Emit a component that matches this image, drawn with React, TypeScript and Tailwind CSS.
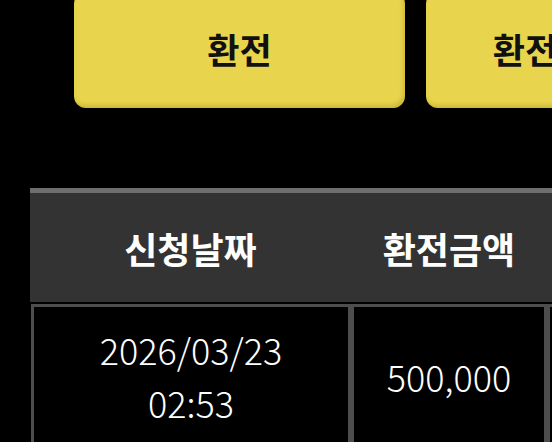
import React from "react";

const font = { fontFamily: '"Noto Sans CJK KR", "Noto Sans", sans-serif' };

function ExchangeButton({ width }: { width: string }) {
  return (
    <button
      className={`${width} h-[116px] shrink-0 rounded-[12px] bg-[#e9d54d] shadow-[inset_-2px_-3px_4px_rgba(120,100,0,0.25)] pb-[4px] text-[35px] font-bold text-[#111] leading-none`}
    >
      환전
    </button>
  );
}

export default function App() {
  return (
    <div className="w-[552px] h-[442px] overflow-hidden bg-black" style={font}>
      <div className="flex gap-[21px] pl-[74px] -mt-[8px]">
        <ExchangeButton width="w-[331px]" />
        <ExchangeButton width="w-[198px]" />
      </div>

      <div className="ml-[30px] mt-[80px] w-[700px]">
        <div className="border-t-[5px] border-[#6e6e6e] bg-[#333333] h-[114px] flex items-center text-white text-[36px] font-bold">
          <div className="w-[321px] text-center">신청날짜</div>
          <div className="w-[196px] text-center">환전금액</div>
          <div className="flex-1" />
        </div>
        <div className="mt-[2px] flex text-white text-[36px] font-light leading-[53px]">
          <div className="ml-[1px] w-[320px] h-[144px] border-[3px] border-[#4d4d4d] flex flex-col items-center justify-center">
            <span>2026/03/23</span>
            <span>02:53</span>
          </div>
          <div className="w-[196px] h-[144px] border-[3px] border-[#4d4d4d] flex items-center justify-center">
            500,000
          </div>
          <div className="flex-1 h-[144px] border-[3px] border-[#4d4d4d]" />
        </div>
      </div>
    </div>
  );
}
